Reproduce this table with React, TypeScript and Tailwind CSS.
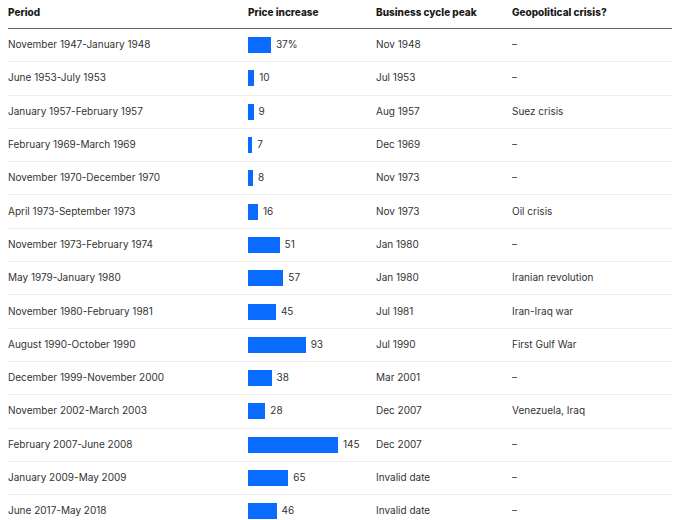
type Row = {
  period: string;
  value: number;
  label: string;
  peak: string;
  crisis: string;
};

const rows: Row[] = [
  { period: 'November 1947-January 1948', value: 37, label: '37%', peak: 'Nov 1948', crisis: '–' },
  { period: 'June 1953-July 1953', value: 10, label: '10', peak: 'Jul 1953', crisis: '–' },
  { period: 'January 1957-February 1957', value: 9, label: '9', peak: 'Aug 1957', crisis: 'Suez crisis' },
  { period: 'February 1969-March 1969', value: 7, label: '7', peak: 'Dec 1969', crisis: '–' },
  { period: 'November 1970-December 1970', value: 8, label: '8', peak: 'Nov 1973', crisis: '–' },
  { period: 'April 1973-September 1973', value: 16, label: '16', peak: 'Nov 1973', crisis: 'Oil crisis' },
  { period: 'November 1973-February 1974', value: 51, label: '51', peak: 'Jan 1980', crisis: '–' },
  { period: 'May 1979-January 1980', value: 57, label: '57', peak: 'Jan 1980', crisis: 'Iranian revolution' },
  { period: 'November 1980-February 1981', value: 45, label: '45', peak: 'Jul 1981', crisis: 'Iran-Iraq war' },
  { period: 'August 1990-October 1990', value: 93, label: '93', peak: 'Jul 1990', crisis: 'First Gulf War' },
  { period: 'December 1999-November 2000', value: 38, label: '38', peak: 'Mar 2001', crisis: '–' },
  { period: 'November 2002-March 2003', value: 28, label: '28', peak: 'Dec 2007', crisis: 'Venezuela, Iraq' },
  { period: 'February 2007-June 2008', value: 145, label: '145', peak: 'Dec 2007', crisis: '–' },
  { period: 'January 2009-May 2009', value: 65, label: '65', peak: 'Invalid date', crisis: '–' },
  { period: 'June 2017-May 2018', value: 46, label: '46', peak: 'Invalid date', crisis: '–' },
];

const cols = 'grid grid-cols-[240px_128px_136px_1fr] items-center';

export default function App() {
  return (
    <div className="h-[520px] w-[680px] overflow-hidden bg-white px-2 font-['Inter',sans-serif] text-[10px] text-[#333]">
      <div className={`${cols} h-[29px] border-b border-[#666] pb-[3px] font-extrabold text-[#1a1a1a]`}>
        <div>Period</div>
        <div>Price increase</div>
        <div>Business cycle peak</div>
        <div>Geopolitical crisis?</div>
      </div>
      {rows.map((r) => (
        <div key={r.period} className={`${cols} h-[33.3px] border-b border-[#eee]`}>
          <div className="pb-[1px]">{r.period}</div>
          <div className="flex items-center gap-[5px]">
            <div className="h-4 bg-[#0a6cff]" style={{ width: `${r.value * 0.62}px` }} />
            <span className="pb-[1px]">{r.label}</span>
          </div>
          <div className="pb-[1px]">{r.peak}</div>
          <div className="pb-[1px]">{r.crisis}</div>
        </div>
      ))}
    </div>
  );
}
